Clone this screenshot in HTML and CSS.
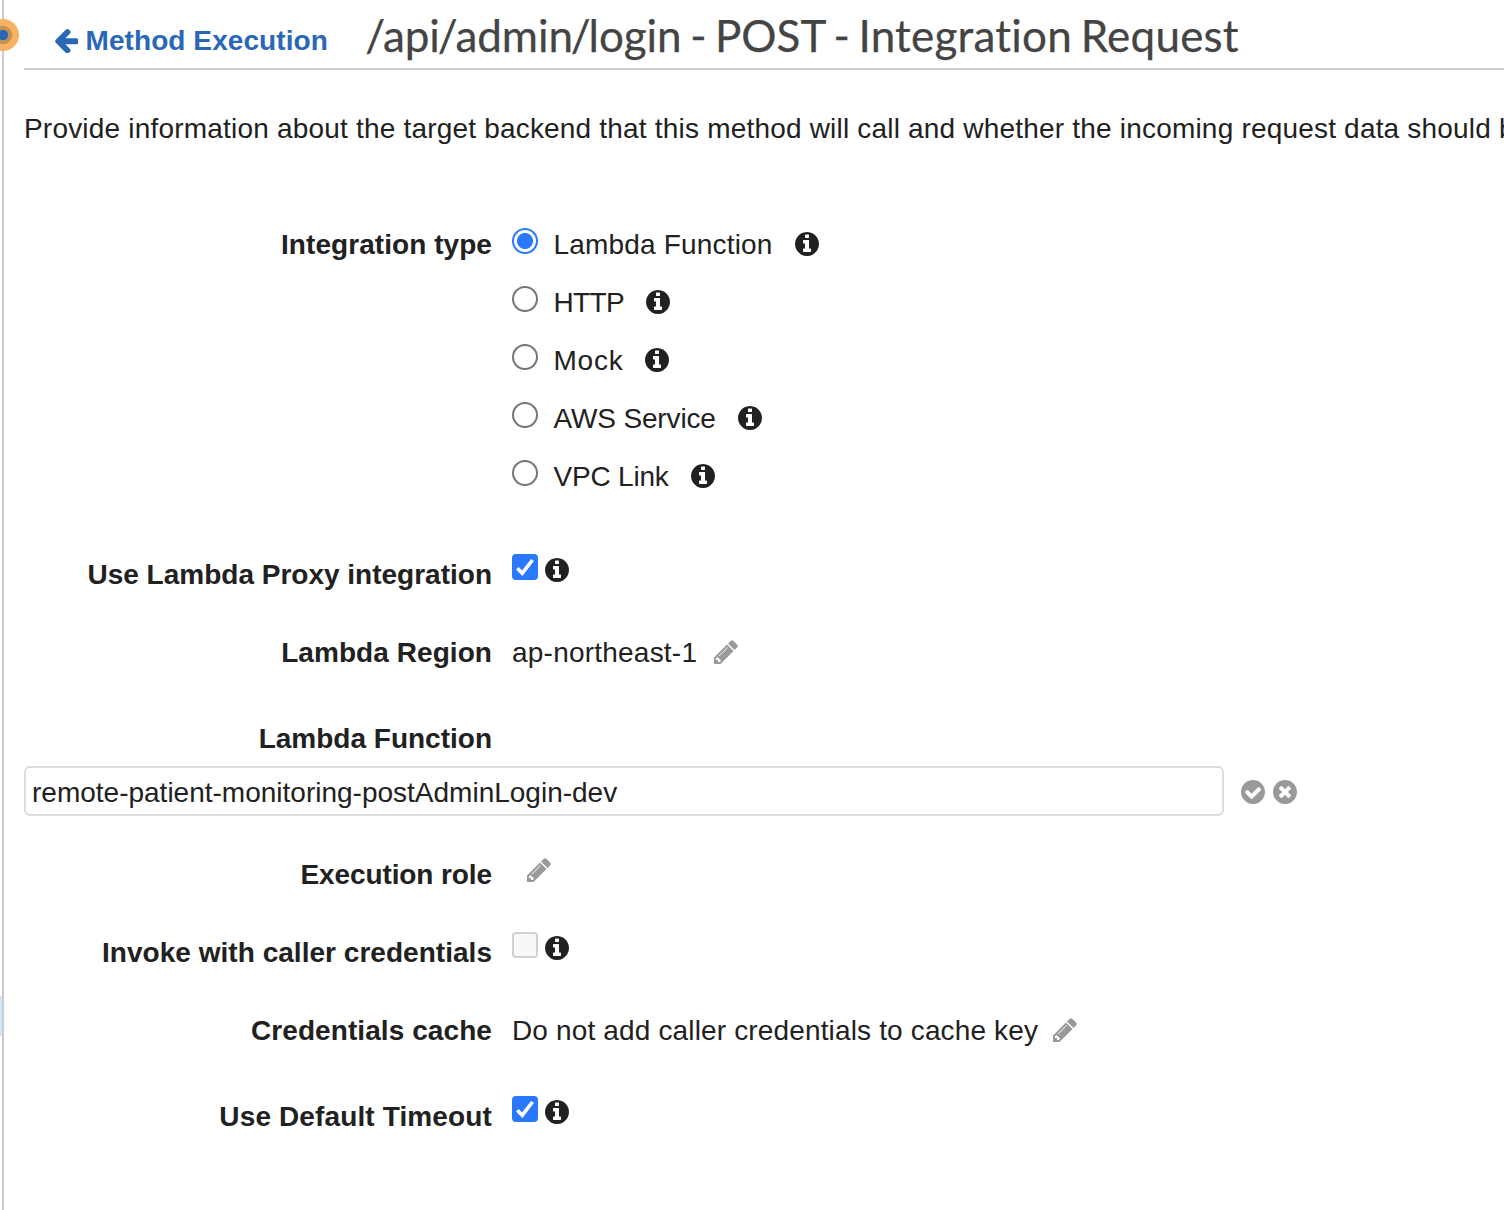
FILE: index.html
```html
<!DOCTYPE html>
<html lang="en">
<head>
<meta charset="utf-8">
<title>Integration Request</title>
<link rel="stylesheet" href="styles.css">
</head>
<body>
<svg class="sprite" aria-hidden="true">
  <symbol id="info" viewBox="128 128 1536 1536"><path d="M1152 1376v-160q0-14-9-23t-23-9h-96v-512q0-14-9-23t-23-9h-320q-14 0-23 9t-9 23v160q0 14 9 23t23 9h96v320h-96q-14 0-23 9t-9 23v160q0 14 9 23t23 9h448q14 0 23-9t9-23zm-128-896v-160q0-14-9-23t-23-9h-192q-14 0-23 9t-9 23v160q0 14 9 23t23 9h192q14 0 23-9t9-23zm640 416q0 209-103 385.5t-279.5 279.5-385.5 103-385.5-103-279.5-279.5-103-385.5 103-385.5 279.5-279.5 385.5-103 385.5 103 279.5 279.5 103 385.5z"/></symbol>
  <symbol id="pencil" viewBox="128 128 1536 1536"><path d="M491 1536l91-91-235-235-91 91v107h128v128h107zm523-928q0-22-22-22-10 0-17 7l-542 542q-7 7-7 17 0 22 22 22 10 0 17-7l542-542q7-7 7-17zm-54-192l416 416-832 832h-416v-416zm683 96q0 53-37 90l-166 166-416-416 166-165q36-38 90-38 53 0 91 38l235 234q37 39 37 91z"/></symbol>
  <symbol id="confirm" viewBox="128 128 1536 1536"><path d="M1412 734q0-28-18-46l-91-90q-19-19-45-19t-45 19l-408 407-226-226q-19-19-45-19t-45 19l-91 90q-18 18-18 46 0 27 18 45l362 362q19 19 45 19 27 0 46-19l543-543q18-18 18-45zm252 162q0 209-103 385.5t-279.5 279.5-385.5 103-385.5-103-279.5-279.5-103-385.5 103-385.5 279.5-279.5 385.5-103 385.5 103 279.5 279.5 103 385.5z"/></symbol>
  <symbol id="cancel" viewBox="128 128 1536 1536"><path d="M1277 1122q0-26-19-45l-181-181 181-181q19-19 19-45 0-27-19-46l-90-90q-19-19-46-19-26 0-45 19l-181 181-181-181q-19-19-45-19-27 0-46 19l-90 90q-19 19-19 46 0 26 19 45l181 181-181 181q-19 19-19 45 0 27 19 46l90 90q19 19 46 19 26 0 45-19l181-181 181 181q19 19 45 19 27 0 46-19l90-90q19-19 19-46zm387-226q0 209-103 385.5t-279.5 279.5-385.5 103-385.5-103-279.5-279.5-103-385.5 103-385.5 279.5-279.5 385.5-103 385.5 103 279.5 279.5 103 385.5z"/></symbol>
</svg>
<span class="resize-dot"></span>
<span class="tree-selection"></span>
<main class="panel">
  <header class="head">
    <a class="back"><svg class="arrow" viewBox="192 181 1472 1558"><path d="M1664 896v128q0 53-32.5 90.5t-84.5 37.5h-704l293 294q38 36 38 90t-38 90l-75 76q-37 37-90 37-52 0-91-37l-651-652q-37-37-37-90 0-52 37-91l651-650q38-38 91-38 52 0 90 38l75 74q38 38 38 91t-38 91l-293 293h704q52 0 84.5 37.5t32.5 90.5z"/></svg><span class="back-text">Method Execution</span></a>
    <h1 class="title"><span class="slash">/</span>api<span class="slash">/</span>admin<span class="slash">/</span>login - POST - <span class="page-name">Integration Request</span></h1>
  </header>
  <p class="intro">Provide information about the target backend that this method will call and whether the incoming request data should be modified.</p>

  <div class="row types">
    <span class="label l-type">Integration type</span>
    <div class="options">
      <label class="option"><span class="radio on"></span><span class="name n-lambda">Lambda Function</span><svg class="icon"><use href="#info"/></svg></label>
      <label class="option"><span class="radio"></span><span class="name n-http">HTTP</span><svg class="icon"><use href="#info"/></svg></label>
      <label class="option"><span class="radio"></span><span class="name n-mock">Mock</span><svg class="icon"><use href="#info"/></svg></label>
      <label class="option"><span class="radio"></span><span class="name n-aws">AWS Service</span><svg class="icon"><use href="#info"/></svg></label>
      <label class="option"><span class="radio"></span><span class="name n-vpc">VPC Link</span><svg class="icon"><use href="#info"/></svg></label>
    </div>
  </div>
  <div class="row proxy">
    <span class="label l-proxy">Use Lambda Proxy integration</span>
    <div class="control"><span class="check on"><svg viewBox="0 0 26 26"><path d="M5.3 14.2l5 5L20.5 6"/></svg></span><svg class="icon raised"><use href="#info"/></svg></div>
  </div>
  <div class="row region">
    <span class="label l-region">Lambda Region</span>
    <div class="control"><span class="value v-region">ap-northeast-1</span><svg class="icon edit"><use href="#pencil"/></svg></div>
  </div>
  <div class="row function">
    <span class="label l-function">Lambda Function</span>
  </div>
  <div class="field">
    <div class="input"><span class="v-input">remote-patient-monitoring-postAdminLogin-dev</span></div>
    <svg class="icon edit"><use href="#confirm"/></svg>
    <svg class="icon edit"><use href="#cancel"/></svg>
  </div>
  <div class="row role">
    <span class="label l-role">Execution role</span>
    <div class="control"><svg class="icon edit raised lone"><use href="#pencil"/></svg></div>
  </div>
  <div class="row invoke">
    <span class="label l-invoke">Invoke with caller credentials</span>
    <div class="control"><span class="check"></span><svg class="icon raised"><use href="#info"/></svg></div>
  </div>
  <div class="row cache">
    <span class="label l-cache">Credentials cache</span>
    <div class="control"><span class="value v-cache">Do not add caller credentials to cache key</span><svg class="icon edit"><use href="#pencil"/></svg></div>
  </div>
  <div class="row timeout">
    <span class="label l-timeout">Use Default Timeout</span>
    <div class="control"><span class="check on"><svg viewBox="0 0 26 26"><path d="M5.3 14.2l5 5L20.5 6"/></svg></span><svg class="icon raised"><use href="#info"/></svg></div>
  </div>
</main>
</body>
</html>
```
FILE: styles.css
```css
* { box-sizing: border-box; }
body {
  margin: 0;
  width: 1504px;
  height: 1210px;
  overflow: hidden;
  position: relative;
  background: #fff;
  color: #212121;
  font: 28px/42px "Liberation Sans", Arial, sans-serif;
}
.sprite { display: none; }
.panel {
  margin-left: 2px;
  height: 1210px;
  padding-left: 20px;
  border-left: 2px solid #ccc;
  overflow: hidden;
}
.resize-dot {
  position: absolute;
  left: -13px;
  top: 19px;
  width: 32px;
  height: 32px;
  border-radius: 50%;
  background: radial-gradient(circle, #2a67b7 0 4.8px, #c79153 5.5px 8.7px, #f7b264 9.4px);
}
.tree-selection {
  position: absolute;
  left: 0;
  top: 996px;
  width: 2px;
  height: 40px;
  background: #d5e6fc;
}
.head {
  display: flex;
  height: 70px;
  border-bottom: 2px solid #ccc;
  white-space: nowrap;
}
.back {
  display: flex;
  width: 342px;
  padding: 20px 0 0 30.5px;
  color: #2a67b7;
  font-weight: bold;
}
.back-text { letter-spacing: 0.08px; }
.arrow { width: 23.5px; height: 24.5px; margin: 8.5px 7.5px 0 0; fill: currentColor; }
.title {
  margin: 0;
  color: #444;
  font: 44px/70px Lato, sans-serif;
  letter-spacing: -0.03px;
  word-spacing: -2.7px;
  font-variant-ligatures: none;
  -webkit-text-stroke: 0.25px #444;
}
.page-name { letter-spacing: 0.22px; }
.slash { margin: 0 -2.2px; }
.slash:first-child { margin-left: -0.8px; }
.intro { margin: 38px 0 74px; white-space: nowrap; letter-spacing: 0.195px; }
.row { display: flex; height: 40px; gap: 20px; white-space: nowrap; }
.label { width: 468px; text-align: right; font-weight: bold; }
.l-type, .l-region { letter-spacing: 0.06px; }
.l-role { letter-spacing: -0.1px; }
.l-invoke { letter-spacing: 0.03px; }
.l-cache { letter-spacing: 0.08px; }
.l-timeout { letter-spacing: 0.13px; }
.control { display: flex; }
.types { height: 272px; }
.option { display: flex; height: 58px; }
.radio {
  width: 26px;
  height: 26px;
  margin: 4px 15.5px 0 0;
  border: 2px solid #767676;
  border-radius: 50%;
}
.radio.on { border-color: #2a78fb; background: radial-gradient(circle, #2a78fb 7.6px, #fff 8.4px); }
.name { margin-right: 22px; }
.n-lambda { letter-spacing: 0.18px; }
.n-http { letter-spacing: -0.65px; }
.n-mock { letter-spacing: 0.75px; }
.n-aws { letter-spacing: -0.15px; }
.n-vpc { letter-spacing: -0.2px; }
.icon { width: 24px; height: 24px; margin-top: 8px; fill: #212121; flex: none; }
.icon.raised { margin-top: 4px; }
.icon.edit { fill: #999; }
.icon.lone { margin-left: 15px; }
.check {
  width: 26px;
  height: 26px;
  margin-right: 7.4px;
  border: 2px solid #d1d1d1;
  border-radius: 4px;
  background: #f8f8f8;
}
.check.on { border: 0; background: #2a78fb; }
.check svg { display: block; fill: none; stroke: #fff; stroke-width: 3.6; }
.v-region { margin-right: 17px; letter-spacing: 0.22px; }
.v-cache { margin-right: 15px; letter-spacing: 0.15px; }
.proxy { margin-top: 58px; }
.region { margin-top: 38px; }
.function { margin-top: 46px; }
.field { display: flex; margin-top: 8px; height: 50px; align-items: center; }
.field .icon { margin: 2px 8px 0 0; }
.input {
  width: 1200px;
  height: 50px;
  margin-right: 17.4px;
  padding: 4px 6px;
  border: 2px solid #ddd;
  border-radius: 6px;
}
.role { margin-top: 38px; }
.invoke, .cache { margin-top: 38px; }
.timeout { margin-top: 46px; }
```
